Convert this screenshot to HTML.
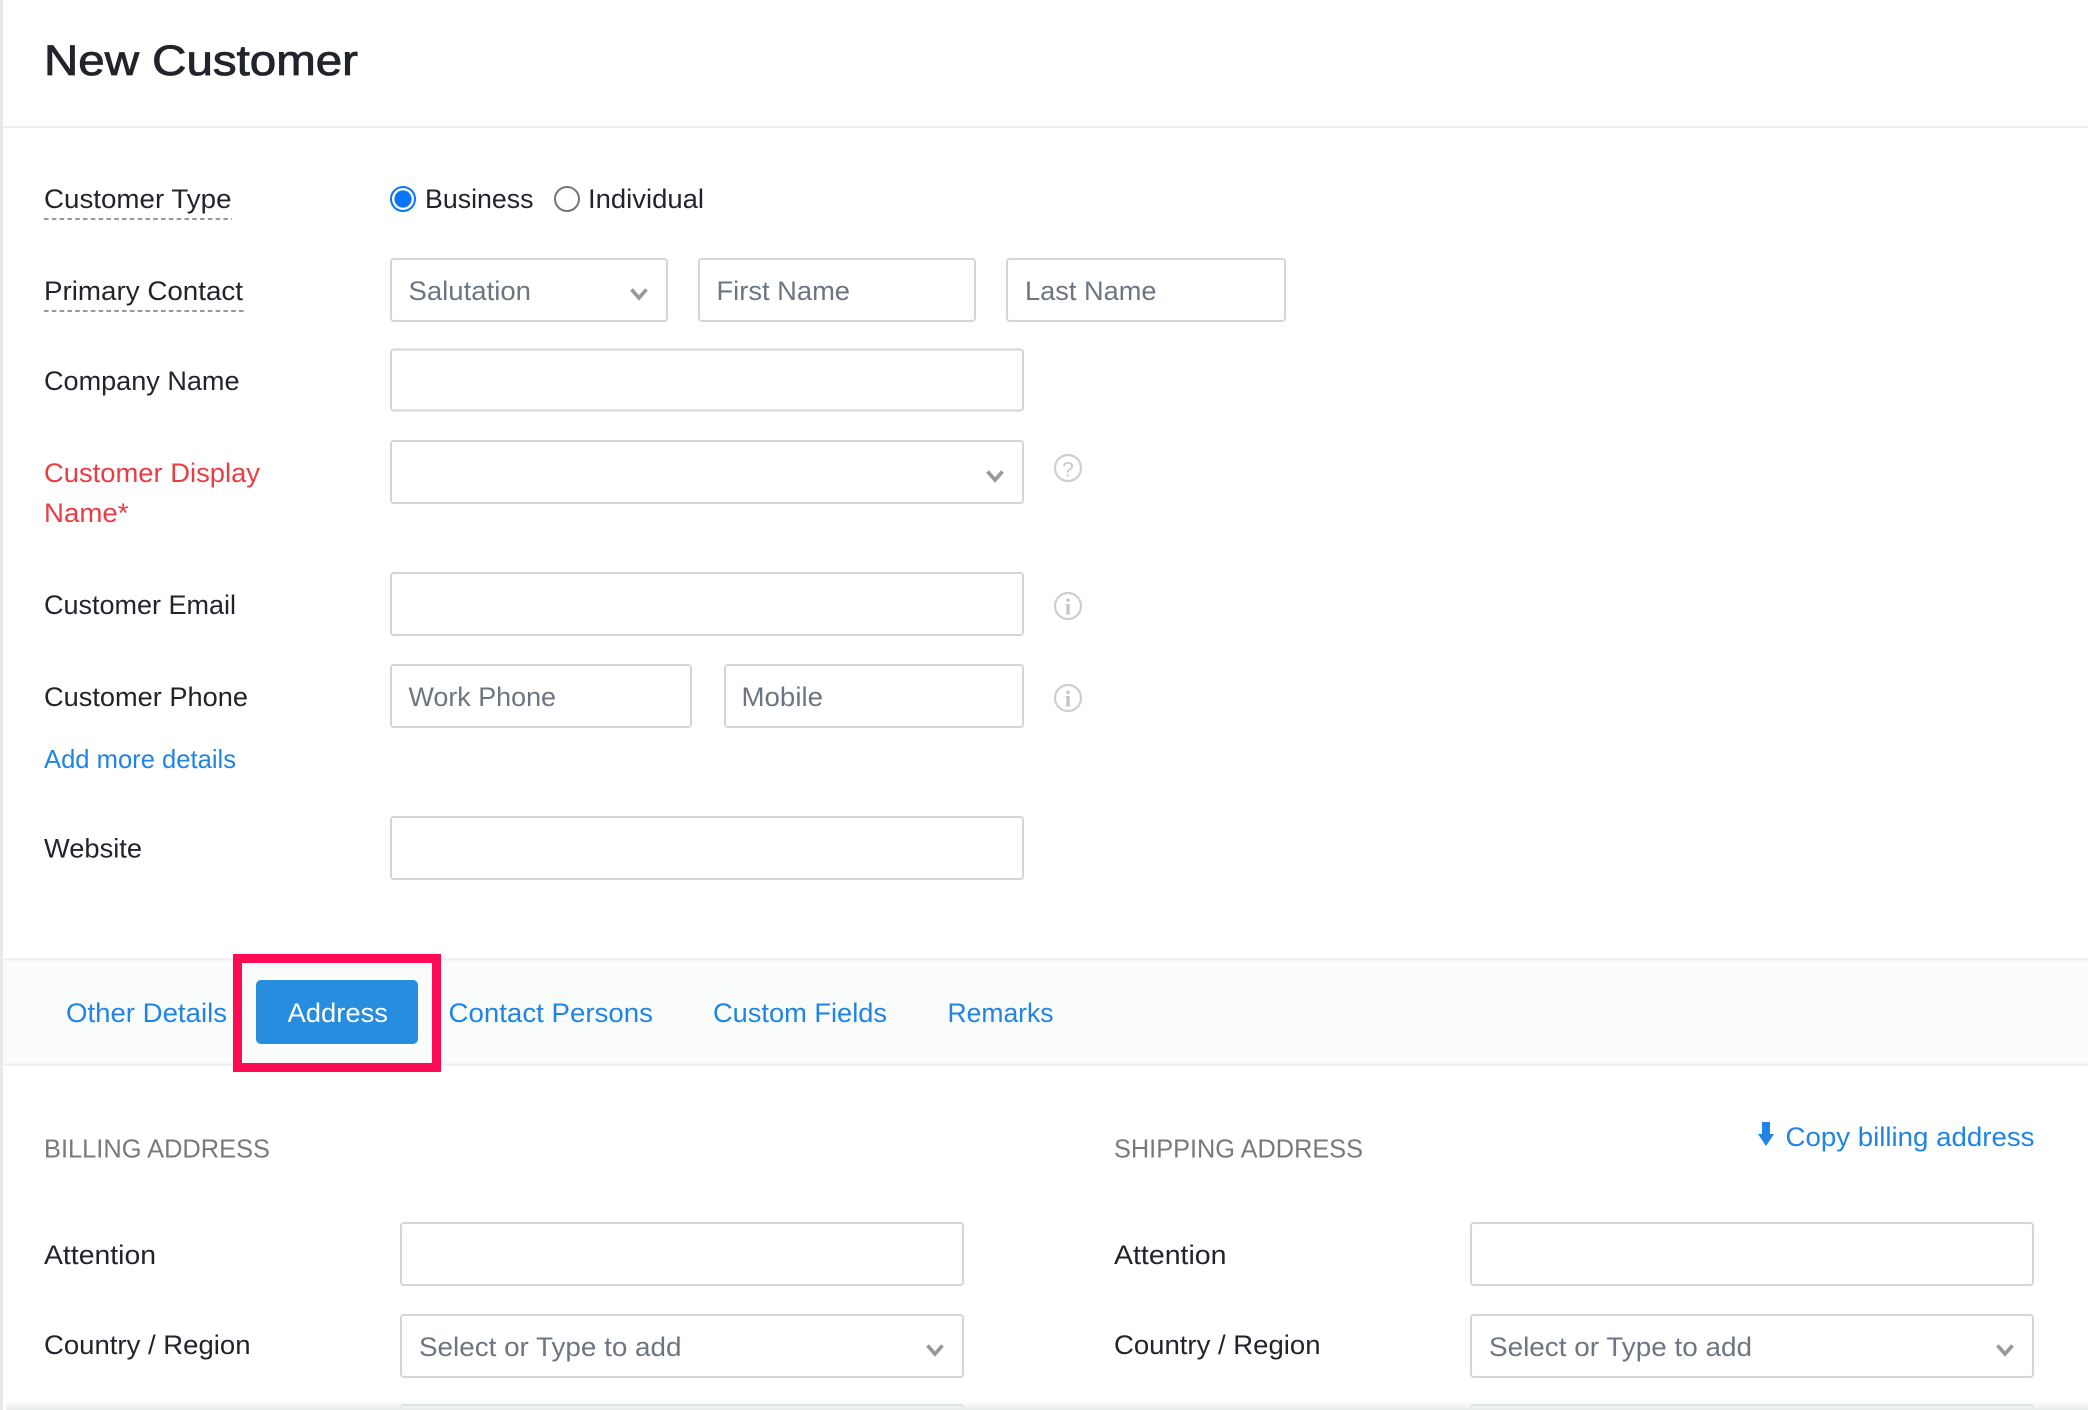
<!DOCTYPE html>
<html lang="en">
<head>
<meta charset="utf-8">
<title>New Customer</title>
<style>
html,body{margin:0;padding:0;background:#fff;width:2088px;height:1410px;overflow:hidden}
svg{display:block;position:absolute;left:0;top:0}
text{font-family:"Liberation Sans",Arial,sans-serif;font-size:27px;fill:#21252b}
.ph{fill:#6d7580}
.lk{fill:#1f84e6}
.red{fill:#ea3c42}
.sec{fill:#777a7d;font-size:26px}
.box{fill:#fff;stroke:#d2d6da;stroke-width:2}
.chev{fill:none;stroke:#999;stroke-width:3.6}
.dash{stroke:#8a8a8a;stroke-width:1.8;stroke-dasharray:4.6 3.2}
.ic{fill:none;stroke:#cfcfcf;stroke-width:2.2}
</style>
</head>
<body>
<svg width="2088" height="1410" viewBox="0 0 2088 1410" xmlns="http://www.w3.org/2000/svg">
<defs>
<linearGradient id="sh" x1="0" y1="0" x2="0" y2="1">
<stop offset="0" stop-color="#eef0f0" stop-opacity="0"/>
<stop offset="1" stop-color="#e9ecec"/>
</linearGradient>
</defs>
<rect width="2088" height="1410" fill="#fff"/>

<!-- header -->
<text x="44" y="75" style="font-size:43px;stroke:#21252b;stroke-width:.85" textLength="314" lengthAdjust="spacingAndGlyphs">New Customer</text>
<rect x="3" y="126" width="2085" height="2" fill="#ebedee"/>

<!-- customer type -->
<text x="44" y="208" textLength="187.500" lengthAdjust="spacingAndGlyphs">Customer Type</text>
<line x1="44" y1="219" x2="232" y2="219" class="dash"/>
<circle cx="403" cy="199" r="12" fill="#fff" stroke="#0a76f6" stroke-width="2"/>
<circle cx="403" cy="199" r="8.6" fill="#0a76f6"/>
<text x="425" y="208" textLength="108.500" lengthAdjust="spacingAndGlyphs">Business</text>
<circle cx="567" cy="199" r="12" fill="#fff" stroke="#767676" stroke-width="2"/>
<text x="588" y="208" textLength="116" lengthAdjust="spacingAndGlyphs">Individual</text>

<!-- primary contact -->
<text x="44" y="300" textLength="199" lengthAdjust="spacingAndGlyphs">Primary Contact</text>
<line x1="44" y1="311" x2="244" y2="311" class="dash"/>
<rect x="391" y="259" width="276" height="62" rx="3" class="box"/>
<text x="408.500" y="300" class="ph" textLength="122.500" lengthAdjust="spacingAndGlyphs">Salutation</text>
<path d="M631.500 289.500 L639 298 L646.500 289.500" class="chev"/>
<rect x="699" y="259" width="276" height="62" rx="3" class="box"/>
<text x="716.500" y="300" class="ph" textLength="133.500" lengthAdjust="spacingAndGlyphs">First Name</text>
<rect x="1007" y="259" width="278" height="62" rx="3" class="box"/>
<text x="1025" y="300" class="ph" textLength="131.500" lengthAdjust="spacingAndGlyphs">Last Name</text>

<!-- company -->
<text x="44" y="390" textLength="195.500" lengthAdjust="spacingAndGlyphs">Company Name</text>
<rect x="391" y="349.500" width="632" height="61" rx="3" class="box"/>

<!-- display name -->
<text x="44" y="482" class="red" textLength="216" lengthAdjust="spacingAndGlyphs">Customer Display</text>
<text x="44" y="522" class="red" textLength="84.500" lengthAdjust="spacingAndGlyphs">Name*</text>
<rect x="391" y="441" width="632" height="62" rx="3" class="box"/>
<path d="M987.500 471.500 L995 480 L1002.500 471.500" class="chev"/>
<circle cx="1068" cy="468" r="13" class="ic"/>
<text x="1068" y="476.500" text-anchor="middle" style="font-size:21px;fill:#c9c9c9">?</text>

<!-- email -->
<text x="44" y="614" textLength="192" lengthAdjust="spacingAndGlyphs">Customer Email</text>
<rect x="391" y="573" width="632" height="62" rx="3" class="box"/>
<circle cx="1068" cy="606" r="13" class="ic"/>
<text x="1068" y="614.500" text-anchor="middle" style="font-size:23px;font-weight:bold;font-family:'Liberation Serif',serif;fill:#c4c4c4">i</text>

<!-- phone -->
<text x="44" y="706" textLength="204" lengthAdjust="spacingAndGlyphs">Customer Phone</text>
<rect x="391" y="665" width="300" height="62" rx="3" class="box"/>
<text x="408.500" y="706" class="ph" textLength="147.500" lengthAdjust="spacingAndGlyphs">Work Phone</text>
<rect x="725" y="665" width="298" height="62" rx="3" class="box"/>
<text x="741.500" y="706" class="ph" textLength="81.500" lengthAdjust="spacingAndGlyphs">Mobile</text>
<circle cx="1068" cy="698" r="13" class="ic"/>
<text x="1068" y="706.500" text-anchor="middle" style="font-size:23px;font-weight:bold;font-family:'Liberation Serif',serif;fill:#c4c4c4">i</text>

<text x="44" y="768" class="lk" style="font-size:26px" textLength="192" lengthAdjust="spacingAndGlyphs">Add more details</text>

<!-- website -->
<text x="44" y="857.500" textLength="98" lengthAdjust="spacingAndGlyphs">Website</text>
<rect x="391" y="817" width="632" height="62" rx="3" class="box"/>

<!-- tabs -->
<rect x="3" y="960" width="2085" height="104" fill="#fafcfc"/>
<rect x="3" y="958.500" width="2085" height="2" fill="#ecedee"/>
<rect x="3" y="1063.500" width="2085" height="2" fill="#ecedee"/>
<text x="66" y="1022" class="lk" textLength="161" lengthAdjust="spacingAndGlyphs">Other Details</text>
<rect x="256" y="980" width="162" height="64" rx="5" fill="#268ddf"/>
<text x="287.500" y="1022" style="fill:#fff" textLength="100.500" lengthAdjust="spacingAndGlyphs">Address</text>
<text x="448.500" y="1022" class="lk" textLength="204.500" lengthAdjust="spacingAndGlyphs">Contact Persons</text>
<text x="713" y="1022" class="lk" textLength="174" lengthAdjust="spacingAndGlyphs">Custom Fields</text>
<text x="947.500" y="1022" class="lk" textLength="106" lengthAdjust="spacingAndGlyphs">Remarks</text>
<rect x="237.500" y="958.500" width="199" height="109" fill="none" stroke="#ff0a55" stroke-width="9"/>

<!-- address headers -->
<text x="44" y="1157.500" class="sec" textLength="226" lengthAdjust="spacingAndGlyphs">BILLING ADDRESS</text>
<text x="1114" y="1157.500" class="sec" textLength="249" lengthAdjust="spacingAndGlyphs">SHIPPING ADDRESS</text>
<path d="M1762 1122 H1770 V1134 H1774 L1766 1146 L1758 1134 H1762 Z" fill="#1f84e6"/>
<text x="1785.500" y="1146" class="lk" textLength="249" lengthAdjust="spacingAndGlyphs">Copy billing address</text>

<!-- billing -->
<text x="44" y="1264" textLength="112" lengthAdjust="spacingAndGlyphs">Attention</text>
<rect x="401" y="1223" width="562" height="62" rx="3" class="box"/>
<text x="44" y="1354" textLength="206.500" lengthAdjust="spacingAndGlyphs">Country / Region</text>
<rect x="401" y="1315" width="562" height="62" rx="3" class="box"/>
<text x="419" y="1356" class="ph" textLength="262.500" lengthAdjust="spacingAndGlyphs">Select or Type to add</text>
<path d="M927.500 1345.500 L935 1354 L942.500 1345.500" class="chev"/>
<rect x="401" y="1405" width="562" height="30" rx="3" class="box"/>

<!-- shipping -->
<text x="1114" y="1264" textLength="112.500" lengthAdjust="spacingAndGlyphs">Attention</text>
<rect x="1471" y="1223" width="562" height="62" rx="3" class="box"/>
<text x="1114" y="1354" textLength="206.500" lengthAdjust="spacingAndGlyphs">Country / Region</text>
<rect x="1471" y="1315" width="562" height="62" rx="3" class="box"/>
<text x="1489" y="1356" class="ph" textLength="263" lengthAdjust="spacingAndGlyphs">Select or Type to add</text>
<path d="M1997.500 1345.500 L2005 1354 L2012.500 1345.500" class="chev"/>
<rect x="1471" y="1405" width="562" height="30" rx="3" class="box"/>

<!-- bottom shade and left edge -->
<rect x="6" y="1400" width="2082" height="10" fill="url(#sh)"/>
<rect x="0" y="0" width="3" height="1410" fill="#e7e7ec"/>
</svg>
</body>
</html>
